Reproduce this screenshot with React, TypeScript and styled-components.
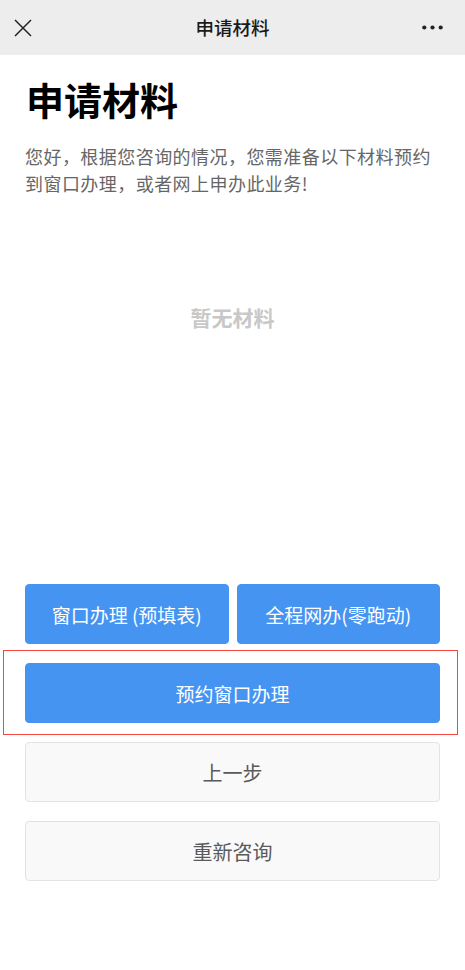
import React from "react";
import styled, { createGlobalStyle } from "styled-components";

const Global = createGlobalStyle`
  html, body { margin: 0; padding: 0; background: #fff; }
  body { font-family: "Noto Sans CJK SC", "Noto Sans", sans-serif; }
  * { box-sizing: border-box; }
`;

const Page = styled.div`
  width: 465px;
  min-height: 970px;
  background: #fff;
  display: flex;
  flex-direction: column;
`;

const TopBar = styled.header`
  height: 55px;
  background: #ededed;
  display: grid;
  grid-template-columns: 60px 1fr 60px;
  align-items: center;
`;

const IconBtn = styled.div<{ $align: "start" | "end" }>`
  display: flex;
  justify-content: ${(p) => (p.$align === "start" ? "flex-start" : "flex-end")};
  padding: ${(p) => (p.$align === "start" ? "0 0 0 13px" : "0 22px 0 0")};
  align-items: center;
`;

const BarTitle = styled.div`
  text-align: center;
  font-size: 18.5px;
  font-weight: 500;
  color: #1a1a1a;
  line-height: 55px;
`;

const Main = styled.main`
  padding: 19px 25px 0;
  display: flex;
  flex-direction: column;
`;

const Heading = styled.h1`
  margin: 0;
  font-size: 38px;
  font-weight: 700;
  line-height: 50px;
  color: #000;
  padding-left: 1px;
`;

const Desc = styled.p`
  margin: 19px 0 0;
  font-size: 18px;
  letter-spacing: 0.45px;
  line-height: 27px;
  color: #666;
`;

const Empty = styled.div`
  height: 387px;
  padding-top: 105px;
  text-align: center;
  font-size: 21px;
  font-weight: 700;
  line-height: 30px;
  color: #c8c8c8;
`;

const Actions = styled.div`
  display: flex;
  flex-direction: column;
  gap: 19px;
`;

const Row = styled.div`
  display: grid;
  grid-template-columns: 1fr 1fr;
  gap: 8px;
`;

const Highlight = styled.div`
  margin: -13px -18px -12px -22px;
  padding: 12px 17px 11px 21px;
  border: 1px solid #f5463f;
`;

const Button = styled.button<{ $variant: "primary" | "default" }>`
  width: 100%;
  height: 60px;
  border-radius: 4px;
  font-family: inherit;
  cursor: pointer;
  display: flex;
  align-items: center;
  justify-content: center;
  ${(p) =>
    p.$variant === "primary"
      ? `
    background: #4694f2;
    border: 1px solid #4694f2;
    color: #fff;
    font-size: 19px;
  `
      : `
    background: #f9f9f9;
    border: 1px solid #e3e3e3;
    color: #5a5a5a;
    font-size: 20px;
  `}
`;

export default function App() {
  return (
    <>
      <Global />
      <Page>
        <TopBar>
          <IconBtn $align="start">
            <svg width="20" height="20" viewBox="0 0 20 20">
              <path d="M2 2 L18 18 M18 2 L2 18" stroke="#222" strokeWidth="1.5" fill="none" />
            </svg>
          </IconBtn>
          <BarTitle>申请材料</BarTitle>
          <IconBtn $align="end">
            <svg width="21" height="5" viewBox="0 0 21 5">
              <circle cx="2.3" cy="2.5" r="2.1" fill="#222" />
              <circle cx="10.5" cy="2.5" r="2.1" fill="#222" />
              <circle cx="18.7" cy="2.5" r="2.1" fill="#222" />
            </svg>
          </IconBtn>
        </TopBar>
        <Main>
          <Heading>申请材料</Heading>
          <Desc>您好，根据您咨询的情况，您需准备以下材料预约到窗口办理，或者网上申办此业务!</Desc>
          <Empty>暂无材料</Empty>
          <Actions>
            <Row>
              <Button $variant="primary">窗口办理 (预填表)</Button>
              <Button $variant="primary">全程网办(零跑动)</Button>
            </Row>
            <Highlight>
              <Button $variant="primary">预约窗口办理</Button>
            </Highlight>
            <Button $variant="default">上一步</Button>
            <Button $variant="default">重新咨询</Button>
          </Actions>
        </Main>
      </Page>
    </>
  );
}
